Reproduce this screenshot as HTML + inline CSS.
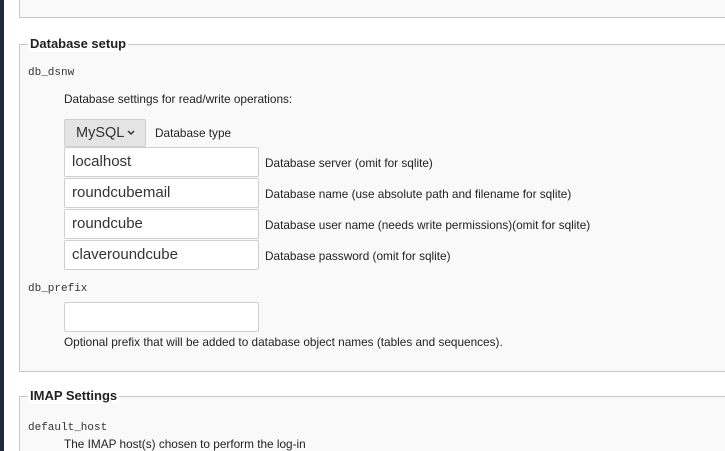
<!DOCTYPE html>
<html style="overflow:hidden;height:451px"><head><style>
body{margin:0;width:725px;height:451px;background:#fff;position:relative;overflow:hidden;font-family:"Liberation Sans",sans-serif;color:#222}
.strip{position:absolute;left:0;top:0;width:4px;height:451px;background:#1e2a3a}
.fs{position:absolute;left:19px;width:705px;background:#f9f9f9;border:1px solid #c8c8c8;border-right:none}
.lg{position:absolute;left:8px;top:-9px;background:#fff;padding:0 2px;font-weight:bold;font-size:13px;line-height:16px;color:#222}
.a{position:absolute;font-size:11.8px;color:#222;white-space:nowrap}
.m{position:absolute;font-family:"Liberation Mono",monospace;font-size:11px;color:#333}
.in{position:absolute;left:64px;width:186px;height:28px;background:#fff;border:1px solid #cfcfcf;border-radius:2px;font-size:15px;color:#333;line-height:28px;padding-left:7px}
.btn{position:absolute;left:64px;top:119px;width:80px;height:26px;background:#e4e4e4;border:1px solid #cfcfcf;border-radius:2px;font-size:14.5px;line-height:26px;color:#333}
</style></head><body>
<div class="strip"></div>
<div class="fs" style="top:-2px;height:18px;"></div>
<div class="fs" style="top:44px;height:326px;"><div class="lg">Database setup</div></div>
<div class="fs" style="top:396px;height:55px;border-bottom:none"><div class="lg">IMAP Settings</div></div>
<div class="m" style="left:28px;top:67px">db_dsnw</div>
<div class="a" style="left:64px;top:92px">Database settings for read/write operations:</div>
<div class="btn"><span style="position:absolute;left:11px">MySQL</span><svg style="position:absolute;left:62px;top:10px" width="8" height="6" viewBox="0 0 8 6"><path d="M1 1l3 3 3-3" stroke="#333" stroke-width="1.5" fill="none"/></svg></div>
<div class="a" style="left:155px;top:126px">Database type</div>
<div class="in" style="top:147px">localhost</div>
<div class="in" style="top:178px">roundcubemail</div>
<div class="in" style="top:209px">roundcube</div>
<div class="in" style="top:240px">claveroundcube</div>
<div class="a" style="left:265px;top:156px">Database server (omit for sqlite)</div>
<div class="a" style="left:265px;top:187px">Database name (use absolute path and filename for sqlite)</div>
<div class="a" style="left:265px;top:218px">Database user name (needs write permissions)(omit for sqlite)</div>
<div class="a" style="left:265px;top:249px">Database password (omit for sqlite)</div>
<div class="m" style="left:28px;top:283px">db_prefix</div>
<div class="in" style="top:302px"></div>
<div class="a" style="left:64px;top:335px">Optional prefix that will be added to database object names (tables and sequences).</div>
<div class="m" style="left:28px;top:422px">default_host</div>
<div class="a" style="left:64px;top:437px">The IMAP host(s) chosen to perform the log-in</div>
</body></html>
